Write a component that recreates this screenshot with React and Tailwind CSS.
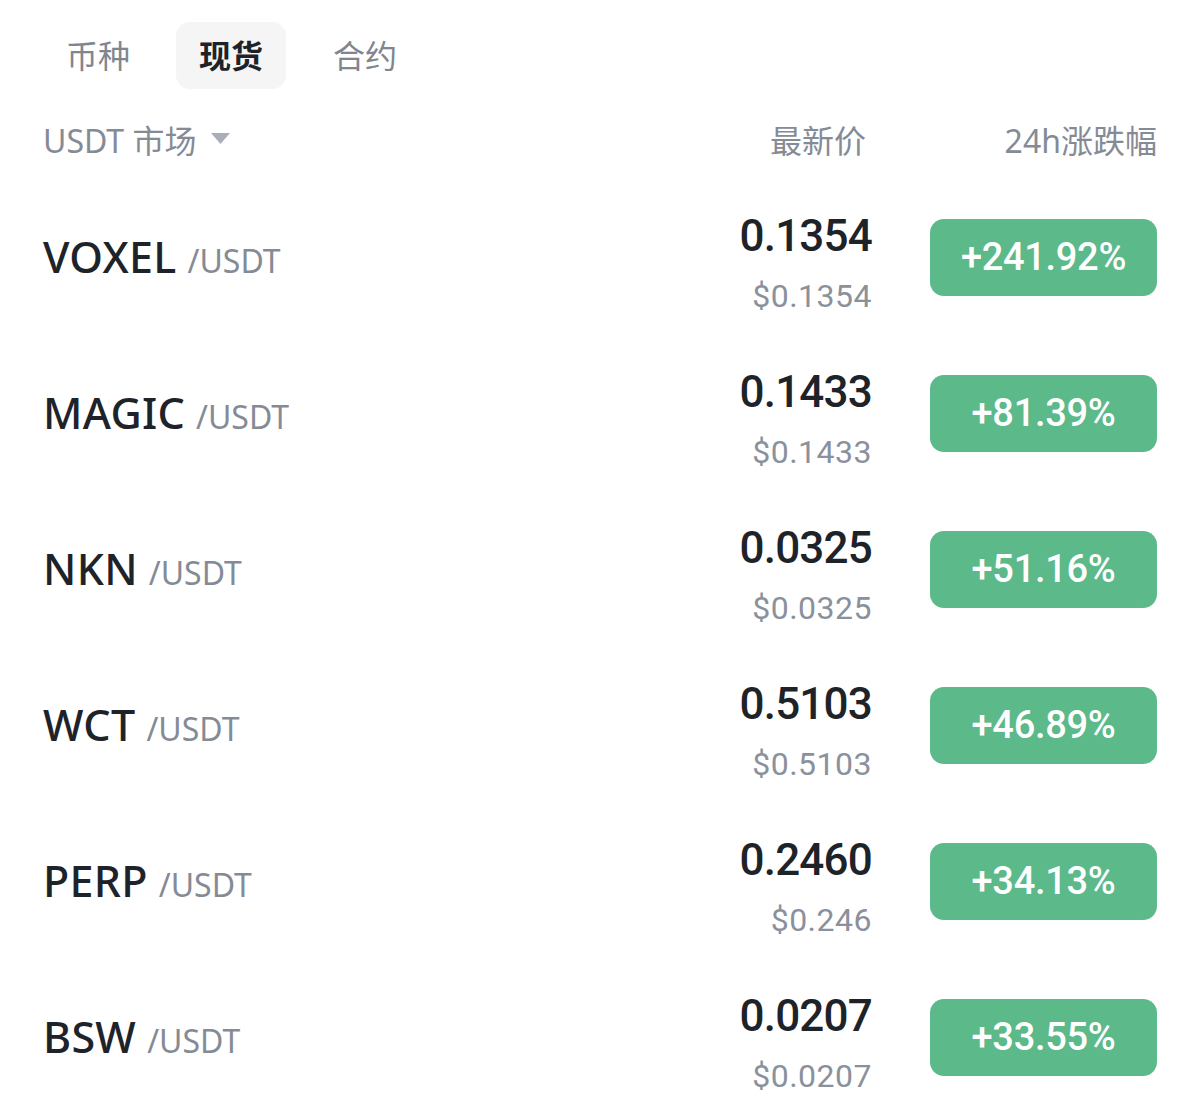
import React from 'react'

const rows = [
  { base: 'VOXEL', price: '0.1354', usd: '$0.1354', change: '+241.92%' },
  { base: 'MAGIC', price: '0.1433', usd: '$0.1433', change: '+81.39%' },
  { base: 'NKN', price: '0.0325', usd: '$0.0325', change: '+51.16%' },
  { base: 'WCT', price: '0.5103', usd: '$0.5103', change: '+46.89%' },
  { base: 'PERP', price: '0.2460', usd: '$0.246', change: '+34.13%' },
  { base: 'BSW', price: '0.0207', usd: '$0.0207', change: '+33.55%' },
]

const sans = { fontFamily: '"Noto Sans", "Noto Sans CJK SC", sans-serif' }
const num = { fontFamily: 'Roboto, "Noto Sans", sans-serif' }

export default function App() {
  return (
    <div className="w-[1200px] h-[1114px] bg-white overflow-hidden" style={sans}>
      {/* Tabs */}
      <div className="flex gap-[24px] pl-[44px] pt-[22px]">
        <div className="h-[67px] px-[22px] flex items-center text-[32px] text-[#80868f]">币种</div>
        <div className="h-[67px] px-[23px] flex items-center rounded-[14px] bg-[#f5f5f5] text-[32px] font-bold text-[#1e2329]">现货</div>
        <div className="h-[67px] px-[23px] flex items-center text-[32px] text-[#80868f]">合约</div>
      </div>

      {/* Header */}
      <div className="h-[90px] pt-[14px] flex items-center pl-[43px] pr-[43px] text-[32px] text-[#858b95]">
        <div className="flex items-center flex-1">
          <span>USDT 市场</span>
          <svg className="ml-[15px] mt-[-4px]" width="19" height="12" viewBox="0 0 19 12">
            <path d="M0 0 H19 L9.5 11 Z" fill="#a9aeb8" />
          </svg>
        </div>
        <div className="w-[200px] text-right pr-[6px]">最新价</div>
        <div className="w-[285px] text-right">24h涨跌幅</div>
      </div>

      {/* Rows */}
      {rows.map((r) => (
        <div key={r.base} className="h-[156px] flex items-center pl-[43px] pr-[43px]">
          <div className="flex-1 flex items-baseline">
            <span className="text-[43px] font-medium text-[#1e2329] tracking-[0.3px]">{r.base}</span>
            <span className="ml-[11px] text-[32px] text-[#858b95]">/USDT</span>
          </div>
          <div className="w-[200px] flex flex-col items-end mt-[13px]" style={num}>
            <span className="text-[44px] leading-[50px] font-medium text-[#1e2329] tracking-[-0.8px]">{r.price}</span>
            <span className="mt-[15px] text-[32px] leading-[40px] text-[#8a919c] tracking-[0.5px]">{r.usd}</span>
          </div>
          <div className="w-[285px] flex justify-end">
            <div
              className="w-[227px] h-[77px] rounded-[14px] bg-[#5cb98a] flex items-center justify-center text-white text-[38px] font-medium tracking-[-0.3px]"
              style={num}
            >
              {r.change}
            </div>
          </div>
        </div>
      ))}
    </div>
  )
}
